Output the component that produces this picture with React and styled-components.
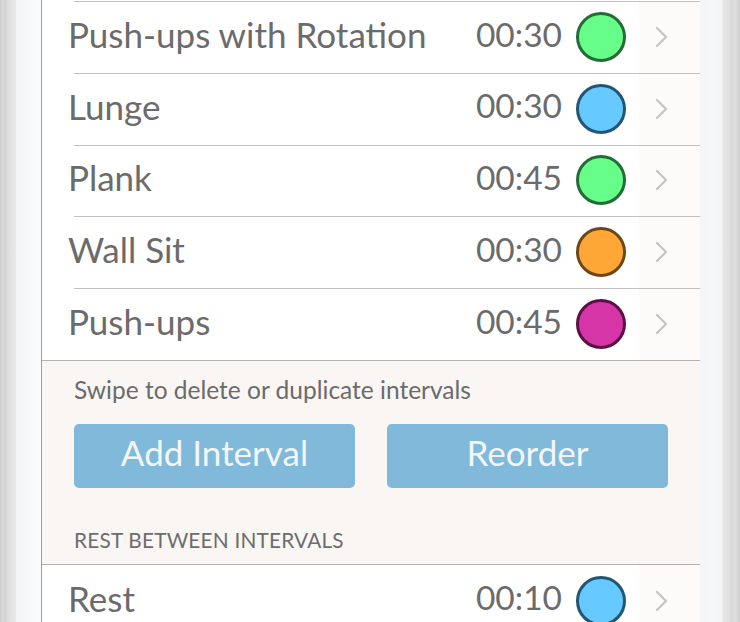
import React from "react";
import styled, { createGlobalStyle } from "styled-components";

const Global = createGlobalStyle`
  html, body { margin: 0; padding: 0; background: #ffffff; }
  body { font-family: "Lato", "Noto Sans", sans-serif; -webkit-font-smoothing: antialiased; }
`;

const Device = styled.div`
  display: flex;
  width: 740px;
  height: 622px;
  overflow: hidden;
`;

const LeftBezel = styled.div`
  width: 41px;
  flex: none;
  background: linear-gradient(
    to right,
    #cdcdcd 0px,
    #d9d9d9 3px,
    #d2d2d2 5px,
    #dedede 8px,
    #e6e6e6 12px,
    #e9e9e9 16px,
    #f1f3f5 16px,
    #f8f9fa 30px,
    #fbfcfd 41px
  );
`;

const RightBezel = styled.div`
  width: 40px;
  flex: none;
  background: linear-gradient(
    to right,
    #f3f5f7 0px,
    #f6f7f9 14px,
    #f3f4f5 22px,
    #e6e6e6 23px,
    #e2e2e2 28px,
    #d8d8d8 32px,
    #dedede 35px,
    #cfcfcf 40px
  );
`;

const Screen = styled.div`
  flex: 1;
  border-left: 1px solid #9d9d9d;
  background: #f9f6f3;
  display: flex;
  flex-direction: column;
`;

const List = styled.div`
  background: #ffffff;
  border-top: ${(p) => (p.$topBorder ? "1px solid #b3b0ad" : "none")};
  border-bottom: ${(p) => (p.$bottomBorder ? "1px solid #b3b0ad" : "none")};
  padding-top: ${(p) => (p.$offset ? "1px" : "0")};
`;

const Row = styled.div`
  position: relative;
  display: flex;
  align-items: center;
  height: 71.75px;
  box-sizing: border-box;
  padding-left: 26px;

  &::before {
    content: "";
    display: ${(p) => (p.$divider ? "block" : "none")};
    position: absolute;
    top: 0;
    left: 32px;
    right: 0;
    height: 1px;
    background: #c2c0be;
  }
`;

const Label = styled.div`
  flex: 1;
  font-size: 35px;
  line-height: 1;
  margin-bottom: 5px;
  color: #6b6b6b;
  white-space: nowrap;
`;

const Time = styled.div`
  font-size: 33.5px;
  line-height: 1;
  margin-bottom: 5px;
  color: #6b6b6b;
  margin-right: 14px;
`;

const Dot = styled.div`
  width: 50px;
  height: 50px;
  box-sizing: border-box;
  border-radius: 50%;
  background: ${(p) => p.$fill};
  border: 3px solid ${(p) => p.$ring};
  margin-right: 13px;
`;

const Accessory = styled.div`
  align-self: stretch;
  width: 61px;
  background: #fdfbf9;
  display: flex;
  align-items: center;
  padding-left: 16px;
  box-sizing: border-box;
`;

const Footer = styled.div`
  padding: 15px 32px 12px;
  display: flex;
  flex-direction: column;
`;

const Hint = styled.div`
  font-size: 24.5px;
  line-height: 28px;
  color: #6b6b6b;
`;

const ButtonRow = styled.div`
  display: flex;
  gap: 32px;
  margin-top: 20px;
`;

const Button = styled.button`
  flex: 1;
  height: 64px;
  border: none;
  border-radius: 5px;
  background: #80b9da;
  color: #f3f6f9;
  font-family: "Lato", "Noto Sans", sans-serif;
  font-size: 35px;
  line-height: 1;
  padding: 0 0 6px;
`;

const SectionHeader = styled.div`
  margin-top: 40px;
  font-size: 20.8px;
  line-height: 24px;
  color: #6d6d6d;
  text-transform: uppercase;
  letter-spacing: 0.2px;
`;

const Chevron = () => (
  <svg width="13" height="22" viewBox="0 0 13 22" fill="none">
    <path d="M2 2 L11 11 L2 20" stroke="#c6c6ca" strokeWidth="2.4" strokeLinecap="round" strokeLinejoin="round" />
  </svg>
);

const COLORS = {
  green: { fill: "#66fd88", ring: "#246b38" },
  blue: { fill: "#66c9ff", ring: "#225672" },
  orange: { fill: "#ffa736", ring: "#6b4719" },
  magenta: { fill: "#d535a7", ring: "#5a1044" },
};

const intervals = [
  { name: "Push-ups with Rotation", time: "00:30", color: "green" },
  { name: "Lunge", time: "00:30", color: "blue" },
  { name: "Plank", time: "00:45", color: "green" },
  { name: "Wall Sit", time: "00:30", color: "orange" },
  { name: "Push-ups", time: "00:45", color: "magenta" },
];

const IntervalRow = ({ name, time, color, divider }) => (
  <Row $divider={divider}>
    <Label>{name}</Label>
    <Time>{time}</Time>
    <Dot $fill={COLORS[color].fill} $ring={COLORS[color].ring} />
    <Accessory>
      <Chevron />
    </Accessory>
  </Row>
);

export default function App() {
  return (
    <>
      <Global />
      <Device>
        <LeftBezel />
        <Screen>
          <List $offset $bottomBorder>
            {intervals.map((it) => (
              <IntervalRow key={it.name} {...it} divider />
            ))}
          </List>
          <Footer>
            <Hint>Swipe to delete or duplicate intervals</Hint>
            <ButtonRow>
              <Button>Add Interval</Button>
              <Button>Reorder</Button>
            </ButtonRow>
            <SectionHeader>Rest Between Intervals</SectionHeader>
          </Footer>
          <List $topBorder>
            <IntervalRow name="Rest" time="00:10" color="blue" />
          </List>
        </Screen>
        <RightBezel />
      </Device>
    </>
  );
}
